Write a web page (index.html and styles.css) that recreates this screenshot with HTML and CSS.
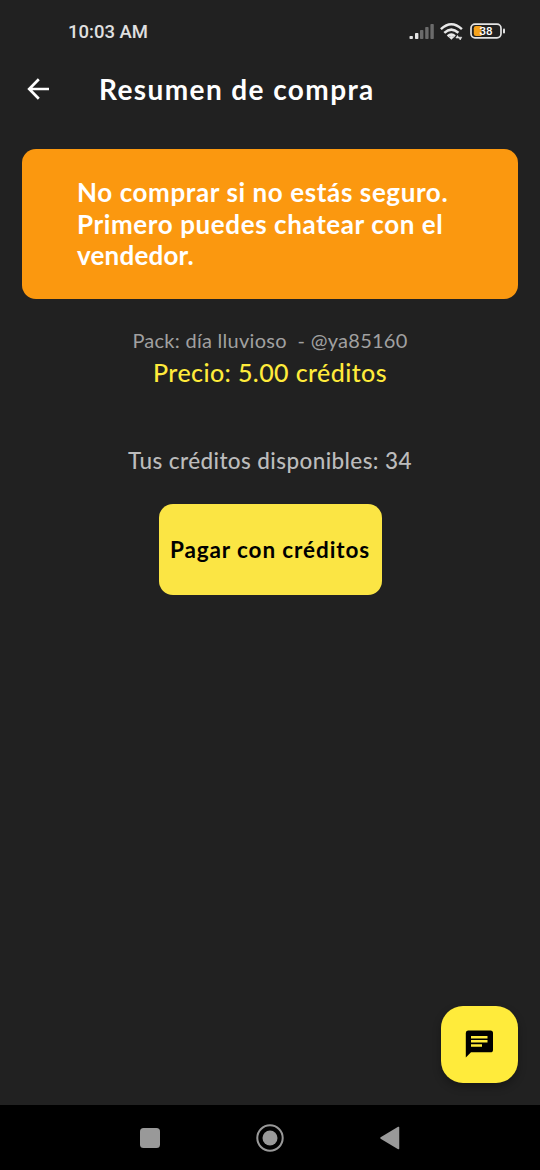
FILE: index.html
```html
<!DOCTYPE html>
<html lang="es">
<head>
<meta charset="utf-8">
<title>Resumen de compra</title>
<link rel="stylesheet" href="styles.css">
</head>
<body>
<div class="screen">
  <div class="status-bar">
    <span class="clock">10:03 AM</span>
    <svg class="status-icons" width="98" height="22" viewBox="408 20 98 22">
      <g fill="#e4e4e4">
        <rect x="409.5" y="36" width="3.4" height="3" rx=".8"/>
        <rect x="415" y="33" width="3.4" height="6" rx=".8"/>
      </g>
      <g fill="#6b6b6b">
        <rect x="420" y="30" width="3.4" height="9" rx=".8"/>
        <rect x="425.2" y="27" width="3.4" height="12" rx=".8"/>
        <rect x="430.4" y="24" width="3.4" height="15" rx=".8"/>
      </g>
      <g fill="none" stroke="#e8e8e8" stroke-width="2.5">
        <path d="M440.9 29.2Q451.3 19.4 461.9 29.2"/>
        <path d="M444.3 32.8Q451.3 26.4 458.4 32.8"/>
        <path d="M447.6 36.2Q451.3 33 455 36.2"/>
      </g>
      <path d="M448.6 37Q451.4 34.8 454.2 37L451.4 39.8Z" fill="#e8e8e8"/>
      <path d="M455.9 38L457.5 35.4L459 38ZM458.6 37.2L460.2 40L461.8 37.2Z" fill="#e8e8e8" stroke="#e8e8e8" stroke-width=".6"/>
      <rect x="471" y="24.2" width="30" height="13.6" rx="4" fill="none" stroke="#e4e4e4" stroke-width="1.7"/>
      <path d="M476 26H481.5V36H476Q473.8 36 473.8 33.8V28.2Q473.8 26 476 26Z" fill="#f5a21b"/>
      <rect x="503" y="28.6" width="2" height="4.8" rx="1" fill="#e4e4e4"/>
      <text class="battery-level" x="486" y="35.3" text-anchor="middle">38</text>
    </svg>
  </div>
  <header class="app-bar">
    <svg class="back" width="24" height="24" viewBox="0 0 24 24">
      <path d="M22 12H3M11.8 2.2L2.2 12L11.8 21.8" fill="none" stroke="#fff" stroke-width="2.7"/>
    </svg>
    <h1 class="title">Resumen de compra</h1>
  </header>
  <main class="content">
    <p class="alert"><span class="line line-1">No comprar si no estás seguro.</span><span class="line line-2">Primero puedes chatear con el</span><span class="line line-3">vendedor.</span></p>
    <p class="pack">Pack: día lluvioso&nbsp; - @ya85160</p>
    <p class="price">Precio: 5.00 créditos</p>
    <p class="balance">Tus créditos disponibles: 34</p>
    <button class="pay">Pagar con créditos</button>
  </main>
  <div class="fab-row">
    <button class="fab" aria-label="Chat">
      <svg width="29" height="28" viewBox="0 0 29 28">
        <path d="M3 .5H25.5Q28 .5 28 3V19.7Q28 22.3 25.5 22.3H6L.8 27.5V3Q.8 .5 3 .5Z" fill="#000"/>
        <path d="M6 7.2H22.5M6 11.3H22.5M6 15.5H17" stroke="#ffeb3b" stroke-width="2.5"/>
      </svg>
    </button>
  </div>
  <nav class="nav-bar">
    <svg width="24" height="30" viewBox="0 0 24 30"><rect x="2" y="5" width="20" height="20" rx="3.5" fill="#999"/></svg>
    <svg width="30" height="30" viewBox="0 0 30 30"><circle cx="15" cy="15" r="12.7" fill="none" stroke="#999" stroke-width="2"/><circle cx="15" cy="15" r="7.5" fill="#999"/></svg>
    <svg width="24" height="30" viewBox="0 0 24 30"><path d="M3 15L20.5 4.5V25.5Z" fill="#999" stroke="#999" stroke-width="1.5" stroke-linejoin="round"/></svg>
  </nav>
</div>
</body>
</html>
```
FILE: styles.css
```css
* { box-sizing: border-box; }
body, h1, p { margin: 0; }
body { background: #212121; }
button { border: 0; padding: 0; }
svg { display: block; }
.screen {
  width: 540px;
  height: 1170px;
  display: flex;
  flex-direction: column;
  background: #212121;
  color: #fff;
  font-family: Lato, "Open Sans", sans-serif;
  white-space: nowrap;
  overflow: hidden;
}
.status-bar {
  height: 62px;
  padding: 0 34px 0 68px;
  display: flex;
  justify-content: space-between;
  align-items: center;
}
.clock { font: 500 18.5px/22px Roboto, sans-serif; color: #e0e0e0; padding-top: 1px; }
.battery-level { font: 500 11.5px Roboto, sans-serif; fill: #fff; }
.app-bar {
  height: 54px;
  padding-left: 27px;
  display: flex;
  align-items: center;
}
.title {
  margin-left: 48px;
  font-size: 28px;
  font-weight: 700;
  line-height: 34px;
  letter-spacing: 1.4px;
}
.content {
  flex: 1;
  padding: 33px 22px 0;
  display: flex;
  flex-direction: column;
  align-items: center;
}
.alert {
  width: 496px;
  height: 150px;
  padding: 28px 55px 0;
  border-radius: 14px;
  background: #fb980f;
  font-size: 26px;
  font-weight: 700;
  line-height: 31.5px;
}
.line { display: block; letter-spacing: .6px; }
.line-3 { letter-spacing: .2px; }
.pack {
  margin-top: 28px;
  font-size: 20px;
  font-weight: 400;
  line-height: 26px;
  letter-spacing: .27px;
  color: #a0a0a0;
}
.price {
  margin-top: 3px;
  font-size: 25px;
  font-weight: 500;
  line-height: 32px;
  letter-spacing: .4px;
  color: #ffeb3b;
}
.balance {
  margin-top: 59px;
  font-size: 22.5px;
  font-weight: 500;
  line-height: 28px;
  letter-spacing: .4px;
  color: #bcbcbc;
}
.pay {
  width: 223px;
  height: 91px;
  margin-top: 29px;
  border-radius: 14px;
  background: #fbe544;
  color: #000;
  font: 700 22.5px/27px Lato, sans-serif;
  letter-spacing: .9px;
}
.fab-row {
  padding: 0 22px 22px;
  display: flex;
  justify-content: flex-end;
}
.fab {
  width: 77px;
  height: 77px;
  border-radius: 22px;
  background: #ffeb3b;
  box-shadow: 0 4px 8px rgba(0, 0, 0, .3);
  display: flex;
  align-items: center;
  justify-content: center;
}
.fab svg { margin-bottom: 2px; }
.nav-bar {
  height: 65px;
  padding: 0 138px;
  background: #000;
  display: flex;
  justify-content: space-between;
  align-items: center;
}
```
